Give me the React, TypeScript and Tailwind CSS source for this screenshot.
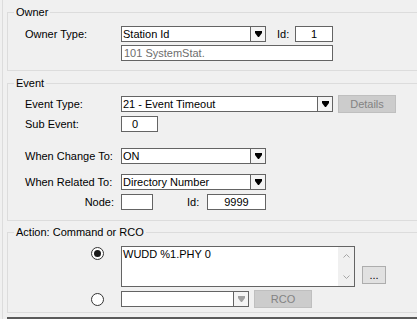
import React from "react";

const LABEL = "w-[96px] shrink-0";

function Arrow({ disabled = false }: { disabled?: boolean }) {
  return (
    <svg width="7" height="6" viewBox="0 0 7 6" className={disabled ? "fill-[#a0a0a0]" : "fill-black"}>
      <polygon points="0,0 7,0 7,2 4,6 3,6 0,2" />
    </svg>
  );
}

function Select({ value, width, disabled = false }: { value: string; width: string; disabled?: boolean }) {
  return (
    <div className={`${width} h-[16px] flex border border-[#646464] bg-white`}>
      <div className="flex-1 pl-[1px] leading-[14px] whitespace-nowrap overflow-hidden">{value}</div>
      <div className="w-[15px] border-l border-[#646464] bg-[#f4f4f4] flex items-center justify-center">
        <Arrow disabled={disabled} />
      </div>
    </div>
  );
}

function Radio({ checked }: { checked?: boolean }) {
  return (
    <div className="w-[13px] h-[13px] rounded-full border border-[#333333] bg-white flex items-center justify-center">
      {checked && <div className="w-[7px] h-[7px] rounded-full bg-[#1a1a1a]" />}
    </div>
  );
}

function Group({ title, children, className }: { title: string; children: React.ReactNode; className: string }) {
  return (
    <fieldset className={`w-[440px] border border-[#dcdcdc] ${className}`}>
      <legend className="ml-[6px] px-[2px] leading-[13px]">{title}</legend>
      <div className="pl-[17px]">{children}</div>
    </fieldset>
  );
}

export default function App() {
  return (
    <div className="w-[417px] h-[319px] overflow-hidden bg-[#f0f0f0] text-[11px] leading-[13px] text-black font-['Liberation_Sans',Arial,sans-serif]">
      <div className="ml-[2px] h-full border-l border-[#dcdcdc] pl-[4px] pt-[6px] flex flex-col">
        <Group title="Owner" className="pt-[7px] pb-[9px]">
          <div className="flex items-center">
            <div className={LABEL}>Owner Type:</div>
            <Select value="Station Id" width="w-[145px]" />
            <div className="ml-[11px] w-[18px]">Id:</div>
            <div className="w-[38px] h-[16px] border border-[#646464] bg-white text-center leading-[14px]">1</div>
          </div>
          <div className="flex mt-[3px]">
            <div className="ml-[96px] w-[212px] h-[16px] border border-[#646464] bg-white pl-[2px] leading-[14px] text-[#6d6d6d]">
              101 SystemStat.
            </div>
          </div>
        </Group>

        <Group title="Event" className="mt-[6px] pt-[5px] pb-[10px]">
          <div className="flex items-center h-[18px]">
            <div className={LABEL}>Event Type:</div>
            <Select value="21 - Event Timeout" width="w-[212px]" />
            <div className="ml-[5px] w-[58px] h-[18px] border border-[#bfbfbf] bg-[#cccccc] text-[#838383] flex items-center justify-center">
              Details
            </div>
          </div>
          <div className="flex items-center mt-[3px]">
            <div className={LABEL}>Sub Event:</div>
            <div className="w-[37px] h-[16px] border border-[#646464] bg-white pl-[10px] leading-[14px]">0</div>
          </div>
          <div className="flex items-center mt-[16px]">
            <div className={LABEL}>When Change To:</div>
            <Select value="ON" width="w-[145px]" />
          </div>
          <div className="flex items-center mt-[10px]">
            <div className={LABEL}>When Related To:</div>
            <Select value="Directory Number" width="w-[145px]" />
          </div>
          <div className="flex items-center mt-[4px]">
            <div className={`${LABEL} text-right pr-[7px]`}>Node:</div>
            <div className="w-[32px] h-[16px] border border-[#646464] bg-white" />
            <div className="ml-[34px] w-[20px]">Id:</div>
            <div className="w-[59px] h-[16px] border border-[#646464] bg-white text-center leading-[14px]">9999</div>
          </div>
        </Group>

        <Group title="Action: Command or RCO" className="mt-[5px] pt-[7px] pb-[4px]">
          <div className="flex items-start">
            <div className={`${LABEL} pl-[66px] pt-[1px]`}>
              <Radio checked />
            </div>
            <div className="w-[234px] h-[41px] border border-[#646464] bg-white flex">
              <div className="flex-1 pl-[1px] pt-[1px]">WUDD %1.PHY 0</div>
              <div className="w-[16px] bg-[#f0f0f0] flex flex-col items-center justify-between py-[7px]">
                <svg width="7" height="4" viewBox="0 0 7 4" className="stroke-[#a6a6a6]" fill="none">
                  <polyline points="0.5,3.5 3.5,0.5 6.5,3.5" />
                </svg>
                <svg width="7" height="4" viewBox="0 0 7 4" className="stroke-[#a6a6a6]" fill="none">
                  <polyline points="0.5,0.5 3.5,3.5 6.5,0.5" />
                </svg>
              </div>
            </div>
            <div className="ml-[7px] mt-[20px] w-[24px] h-[18px] border border-[#adadad] bg-[#e1e1e1] flex items-center justify-center">
              ...
            </div>
          </div>
          <div className="flex items-center h-[18px] mt-[3px]">
            <div className={`${LABEL} pl-[66px]`}>
              <Radio />
            </div>
            <Select value="" width="w-[128px]" disabled />
            <div className="ml-[5px] w-[58px] h-[18px] border border-[#bfbfbf] bg-[#cccccc] text-[#838383] flex items-center justify-center">
              RCO
            </div>
          </div>
        </Group>

        <div className="mt-[4px] h-[2px] w-[440px] bg-[#5a5a5a]" />
      </div>
    </div>
  );
}
